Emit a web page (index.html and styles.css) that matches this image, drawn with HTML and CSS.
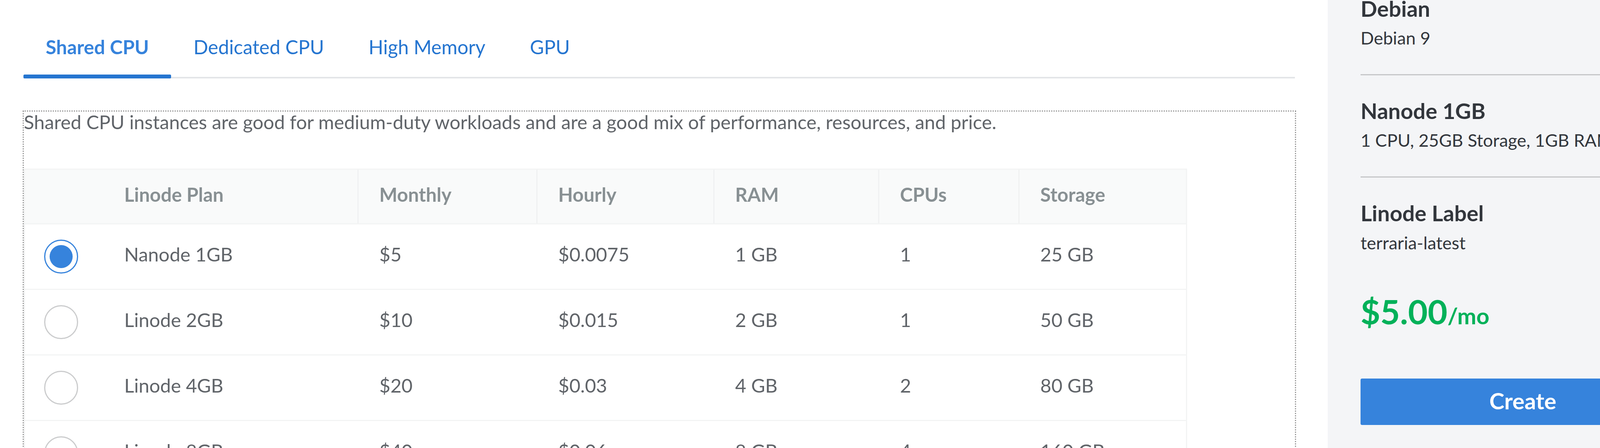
FILE: index.html
```html
<!DOCTYPE html>
<html lang="en">
<head>
<meta charset="utf-8">
<title>Create Linode</title>
<link rel="stylesheet" href="styles.css">
</head>
<body>
<div class="page">
  <main class="main">
    <nav class="tabs">
      <div class="tab active">Shared CPU</div>
      <div class="tab">Dedicated CPU</div>
      <div class="tab">High Memory</div>
      <div class="tab">GPU</div>
    </nav>
    <section class="panel">
      <p class="desc">Shared CPU instances are good for medium-duty workloads and are a good mix of performance, resources, and price.</p>
      <div class="plans">
        <div class="row head">
          <div class="cell radio-cell"></div>
          <div class="cell first">Linode Plan</div>
          <div class="cell sep">Monthly</div>
          <div class="cell sep">Hourly</div>
          <div class="cell sep">RAM</div>
          <div class="cell sep">CPUs</div>
          <div class="cell sep">Storage</div>
        </div>
        <div class="row">
          <div class="cell radio-cell"><span class="radio checked"></span></div>
          <div class="cell first">Nanode 1GB</div>
          <div class="cell">$5</div>
          <div class="cell">$0.0075</div>
          <div class="cell">1 GB</div>
          <div class="cell">1</div>
          <div class="cell">25 GB</div>
        </div>
        <div class="row">
          <div class="cell radio-cell"><span class="radio"></span></div>
          <div class="cell first">Linode 2GB</div>
          <div class="cell">$10</div>
          <div class="cell">$0.015</div>
          <div class="cell">2 GB</div>
          <div class="cell">1</div>
          <div class="cell">50 GB</div>
        </div>
        <div class="row">
          <div class="cell radio-cell"><span class="radio"></span></div>
          <div class="cell first">Linode 4GB</div>
          <div class="cell">$20</div>
          <div class="cell">$0.03</div>
          <div class="cell">4 GB</div>
          <div class="cell">2</div>
          <div class="cell">80 GB</div>
        </div>
        <div class="row">
          <div class="cell radio-cell"><span class="radio"></span></div>
          <div class="cell first">Linode 8GB</div>
          <div class="cell">$40</div>
          <div class="cell">$0.06</div>
          <div class="cell">8 GB</div>
          <div class="cell">4</div>
          <div class="cell">160 GB</div>
        </div>
      </div>
    </section>
  </main>
  <aside class="sidebar">
    <div class="sum-section top">
      <div class="sum-title">Debian</div>
      <div class="sum-text">Debian 9</div>
    </div>
    <div class="sum-section">
      <div class="sum-title">Nanode 1GB</div>
      <div class="sum-text">1 CPU, 25GB Storage, 1GB RAM</div>
    </div>
    <div class="sum-section last">
      <div class="sum-title">Linode Label</div>
      <div class="sum-text">terraria-latest</div>
    </div>
    <div class="price">$5.00<span class="per">/mo</span></div>
    <button class="create" type="button">Create</button>
  </aside>
</div>
</body>
</html>
```

FILE: styles.css
```css
html, body {
  margin: 0;
  padding: 0;
  background: #ffffff;
}

body {
  font-family: Lato, "Noto Sans", "Liberation Sans", sans-serif;
  width: 4322px;
  height: 1148px;
  overflow: hidden;
}

.page {
  display: flex;
  height: 1148px;
  overflow: hidden;
}

.main {
  flex: 0 0 3399px;
  box-sizing: border-box;
  padding: 91px 81px 0 58px;
}

/* Tabs */
.tabs {
  display: flex;
  margin: 0 3px 82px 2px;
  border-bottom: 4px solid #e3e5e8;
}

.tab {
  position: relative;
  padding: 0 57px 47px;
  font-size: 49.5px;
  line-height: 1.2;
  color: #2575d0;
  white-space: nowrap;
}

.tab.active {
  color: #3683dc;
  font-weight: 700;
}

.tab.active::after {
  content: "";
  position: absolute;
  left: 0;
  right: 0;
  bottom: -4px;
  height: 10px;
  background: #2575d0;
  border-radius: 3px;
}

/* Panel */
.panel {
  border: 3px dotted #9a9a9a;
  min-height: 1200px;
}

.desc {
  margin: 0 0 92px;
  font-size: 48.8px;
  line-height: 1.1;
  color: #606469;
}

/* Plans table */
.plans {
  width: 2978px;
  box-sizing: border-box;
  border: 3px solid #f3f4f4;
  border-bottom: none;
}

.row {
  display: grid;
  grid-template-columns: 198px 653px 458px 453px 422px 359px 1fr;
  height: 168px;
  box-sizing: border-box;
  border-bottom: 3px solid #f3f4f4;
  font-size: 49px;
  line-height: 1.2;
  color: #606469;
}

.row.head {
  height: 140px;
  background: #f9fafa;
  color: #889093;
  font-weight: 700;
}

.cell {
  display: flex;
  align-items: center;
  padding: 0 0 12px 56px;
  white-space: nowrap;
}

.row.head .cell {
  padding-bottom: 10px;
}

.row.head .cell.sep {
  border-left: 3px solid #f0f1f2;
  padding-left: 53px;
}

.row .cell.radio-cell {
  padding: 0 0 0 49px;
}

.radio {
  display: block;
  position: relative;
  width: 87px;
  height: 87px;
  box-sizing: border-box;
  border: 3px solid #cbcccd;
  border-radius: 50%;
  background: #ffffff;
}

.radio.checked {
  border-color: #3683dc;
}

.radio.checked::after {
  content: "";
  position: absolute;
  left: 11px;
  top: 11px;
  width: 59px;
  height: 59px;
  border-radius: 50%;
  background: #3683dc;
}

/* Sidebar */
.sidebar {
  flex: 1;
  box-sizing: border-box;
  padding: 0 8px 0 84px;
  background: #f4f5f7;
  color: #32363c;
}

.sum-section {
  padding: 57px 0 66px;
  border-bottom: 3px solid #c5c6c8;
}

.sum-section.top {
  padding-top: 0;
  margin-top: -12px;
}

.sum-section.last {
  padding-bottom: 0;
  border-bottom: none;
}

.sum-title {
  font-size: 56px;
  line-height: 1.2;
  font-weight: 700;
  margin-bottom: 15px;
}

.sum-text {
  font-size: 45px;
  line-height: 1.2;
}

.price {
  margin-top: 97px;
  font-size: 87px;
  line-height: 1.2;
  font-weight: 700;
  color: #01b159;
}

.price .per {
  font-size: 58px;
}

.create {
  display: block;
  width: 100%;
  height: 119px;
  margin-top: 120px;
  padding: 0 0 6px;
  border: none;
  border-radius: 4px;
  background: #3683dc;
  color: #ffffff;
  font-family: Lato, "Noto Sans", "Liberation Sans", sans-serif;
  font-size: 58px;
  font-weight: 700;
}
```
